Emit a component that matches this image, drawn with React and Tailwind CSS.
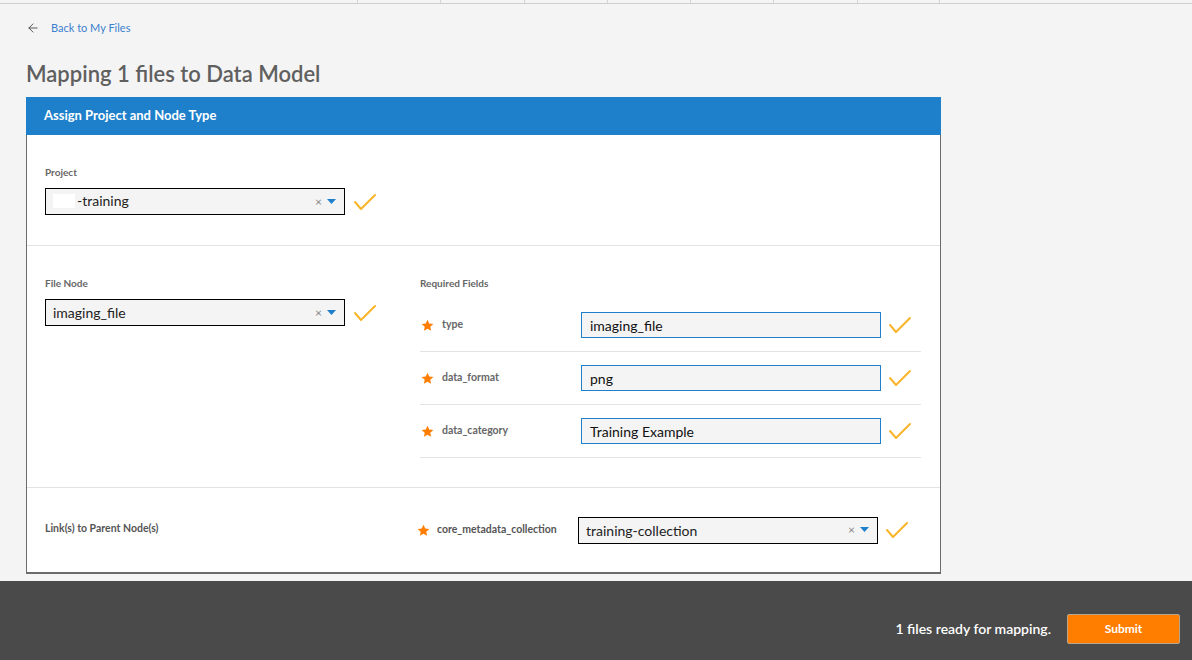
import { ArrowLeft } from "lucide-react";

const font = { fontFamily: "Lato, 'Noto Sans', sans-serif" };

const Check = () => (
  <svg width="24" height="18" viewBox="0 0 24 18" className="shrink-0">
    <polyline points="2,9 8,16 22,2" fill="none" stroke="#f9b52a" strokeWidth="2" strokeLinecap="round" strokeLinejoin="round" />
  </svg>
);

const Star = () => (
  <svg width="13" height="13" viewBox="0 0 24 24" className="shrink-0">
    <path d="M12 1.5l3.2 7 7.6.8-5.7 5.1 1.6 7.5L12 18l-6.7 3.9 1.6-7.5L1.2 9.3l7.6-.8z" fill="#ff7e00" />
  </svg>
);

const Select = ({ children }) => (
  <div className="w-[300px] h-[27px] border border-black bg-[#f4f4f4] flex items-center pl-[7px] pr-[8px]">
    <div className="flex-1 text-[14px] text-[#222] truncate">{children}</div>
    <span className="text-[12px] text-[#888] mr-[5px] leading-none">×</span>
    <svg width="9" height="6" viewBox="0 0 9 6">
      <polygon points="0,0 9,0 4.5,5" fill="#1e7fcb" />
    </svg>
  </div>
);

const fields = [
  { name: "type", value: "imaging_file" },
  { name: "data_format", value: "png" },
  { name: "data_category", value: "Training Example" },
];

export default function App() {
  return (
    <div style={font} className="w-[1192px] h-[660px] bg-[#f4f4f4] flex flex-col overflow-hidden">
      {/* nav remnant */}
      <div className="h-[4px] border-b border-[#cfcfcf] flex pl-[357px] shrink-0">
        {Array.from({ length: 7 }).map((_, i) => (
          <div key={i} className="w-[83.3px] border-l border-[#d4d4d4] last:border-r" />
        ))}
      </div>

      <div className="flex-1 pl-[26px]">
        <div className="flex items-center gap-[11px] mt-[17px] h-[14px]">
          <ArrowLeft size={14} strokeWidth={1.5} className="text-[#444]" />
          <span className="text-[11px] text-[#3a7fcf]">Back to My Files</span>
        </div>

        <h1 className="mt-[24px] text-[22px] font-semibold text-[#5f5f5f] leading-[30px]">Mapping 1 files to Data Model</h1>

        <div className="mt-[8px] w-[915px] bg-white border-l border-r border-b-2 border-[#6b6b6b]">
          <div className="h-[38px] bg-[#1e7fcb] flex items-center px-[18px] text-white text-[13px] font-bold -mx-px">
            Assign Project and Node Type
          </div>

          {/* Project */}
          <div className="h-[111px] border-b border-[#e3e3e3] px-[18px] pt-[30px]">
            <div className="text-[10px] font-bold text-[#666]">Project</div>
            <div className="flex items-center gap-[8px] mt-[8px]">
              <Select>
                <span className="inline-flex items-center">
                  <span className="inline-block w-[22px] h-[14px] bg-white mr-[2px]" />
                  -training
                </span>
              </Select>
              <Check />
            </div>
          </div>

          {/* File node */}
          <div className="h-[242px] border-b border-[#e3e3e3] px-[18px] pt-[30px] flex">
            <div className="w-[375px]">
              <div className="text-[10px] font-bold text-[#666]">File Node</div>
              <div className="flex items-center gap-[8px] mt-[8px]">
                <Select>imaging_file</Select>
                <Check />
              </div>
            </div>
            <div className="w-[501px]">
              <div className="text-[10px] font-bold text-[#666]">Required Fields</div>
              <div className="mt-[8px]">
                {fields.map((f) => (
                  <div key={f.name} className="h-[53px] border-b border-[#e3e3e3] flex items-center">
                    <div className="w-[161px] flex items-center gap-[8px] pl-px">
                      <Star />
                      <span className="text-[10.5px] font-bold text-[#666]">{f.name}</span>
                    </div>
                    <div className="w-[300px] h-[26px] border border-[#1e7fcb] bg-[#f4f4f4] flex items-center px-[8px] text-[14px] text-[#111]">
                      {f.value}
                    </div>
                    <div className="ml-[7px]">
                      <Check />
                    </div>
                  </div>
                ))}
              </div>
            </div>
          </div>

          {/* Links */}
          <div className="h-[84px] px-[18px] flex items-center">
            <div className="w-[372px] text-[10.5px] font-bold text-[#555] -mt-[2px]">Link(s) to Parent Node(s)</div>
            <div className="flex items-center">
              <Star />
              <span className="ml-[7px] w-[141px] text-[10.5px] font-bold text-[#555]">core_metadata_collection</span>
              <Select>training-collection</Select>
              <div className="ml-[7px]">
                <Check />
              </div>
            </div>
          </div>
        </div>
      </div>

      {/* footer */}
      <div className="h-[79px] bg-[#4a4a4a] flex items-start justify-end pt-[33px] pr-[12px] gap-[16px] shrink-0">
        <span className="text-[14px] font-semibold text-white leading-[30px]">1 files ready for mapping.</span>
        <button className="w-[113px] h-[30px] bg-[#ff7e00] border border-[#b8a58f] rounded-[2px] text-white text-[12px] font-bold">
          Submit
        </button>
      </div>
    </div>
  );
}
